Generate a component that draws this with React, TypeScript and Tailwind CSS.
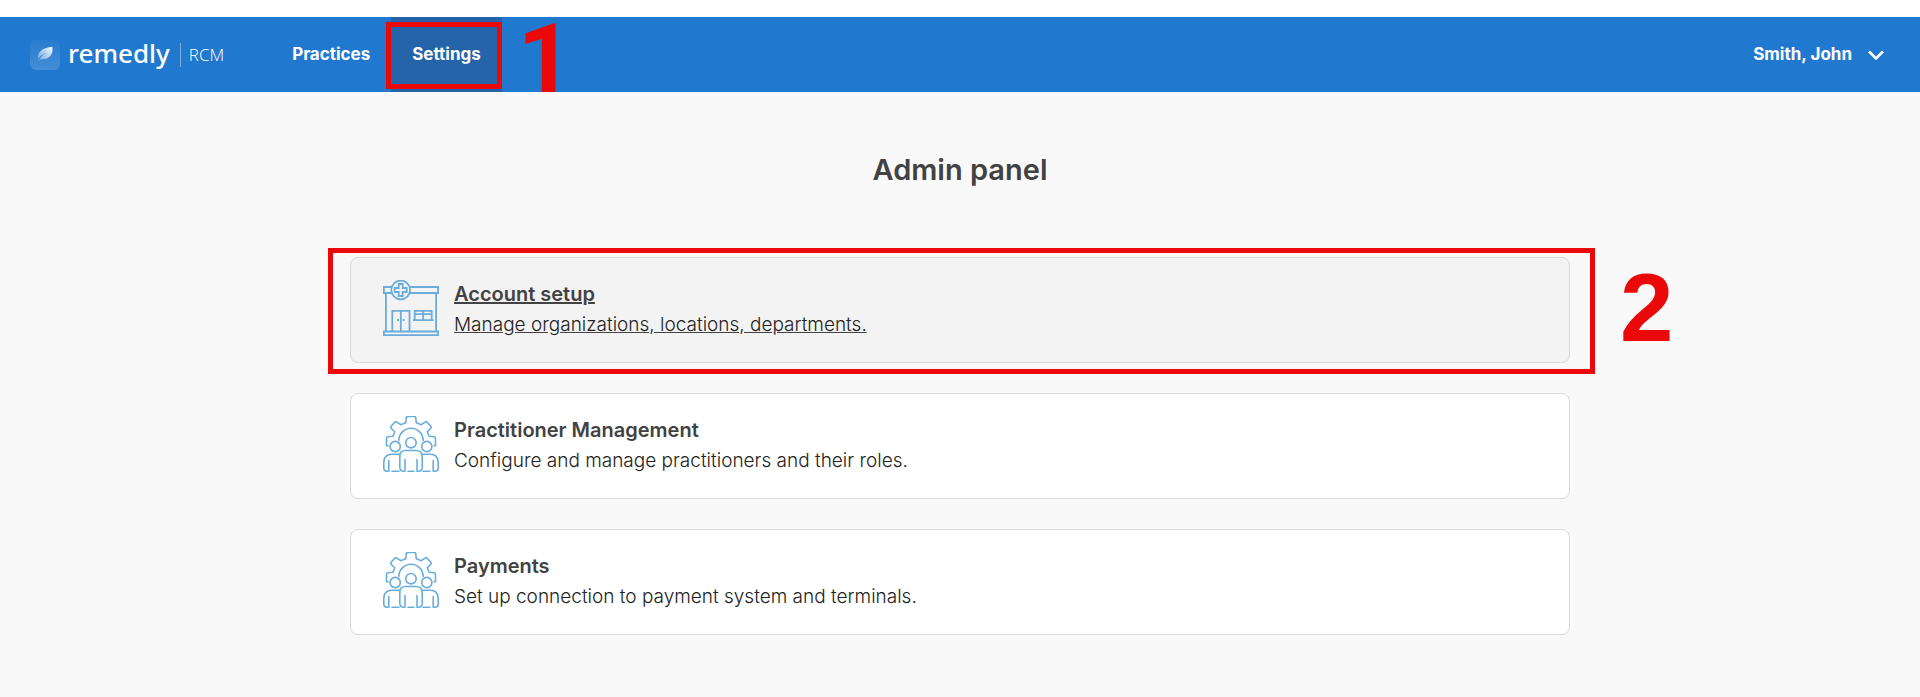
import React from "react";

type Panel = {
  title: string;
  description: string;
  icon: React.ReactNode;
  active?: boolean;
};

function LogoMark() {
  return (
    <svg viewBox="0 0 30 30" className="h-[30px] w-[30px]" aria-hidden="true">
      <defs>
        <linearGradient id="tile" x1="0" y1="0" x2="0" y2="1">
          <stop offset="0" stopColor="#fff" stopOpacity="0.03" />
          <stop offset="1" stopColor="#fff" stopOpacity="0.16" />
        </linearGradient>
        <linearGradient id="leaf" x1="1" y1="0" x2="0" y2="1">
          <stop offset="0.1" stopColor="#fff" stopOpacity="0.9" />
          <stop offset="1" stopColor="#fff" stopOpacity="0.25" />
        </linearGradient>
      </defs>
      <rect width="30" height="30" rx="6" fill="url(#tile)" />
      <path
        d="M22.4 6.8c-5 .7-9.500 1.800-12.300 4.700-2 2.100-2.600 4.600-1.900 7.200 2.200-3.100 5-5 8.300-6.200-3.300 2-6.200 4.500-8.100 8.700 1-1.200 2-1.900 3.300-2 4 .1 7.300-.9 9.200-3.900 1.600-2.600 1.900-5.500 1.500-8.500z"
        fill="url(#leaf)"
      />
    </svg>
  );
}

function BuildingIcon() {
  return (
    <svg
      viewBox="0 0 56 56"
      className="h-14 w-14 shrink-0"
      fill="none"
      stroke="#6aaddc"
      strokeWidth="1.8"
      aria-hidden="true"
    >
      <path d="M8.500 7H.9v6h8M26.500 7h28.600v6H26.500M2.900 13v38.500M53.100 13v38.500" />
      <circle cx="17.700" cy="10" r="9.400" />
      <path d="M15.700 4h4v4h4v4h-4v4h-4v-4h-4V8h4z" />
      <path d="M.9 51.500h54.200v3.700H.9zM9.300 51V30.900h17.200V51M17.800 31v20" />
      <path d="M14 40h2M19.700 40h2M31.700 40v-9.200h17V40M40.200 31v9M31.700 34.200h17M30 40.200h20.600" />
    </svg>
  );
}

function TeamIcon() {
  return (
    <svg
      viewBox="0 0 56 56"
      className="h-14 w-14 shrink-0"
      fill="none"
      stroke="#6aaddc"
      strokeWidth="1.600"
      strokeLinecap="round"
      strokeLinejoin="round"
      aria-hidden="true"
    >
      <path d="M5 29.700H3.500v-7.500q0-1.500 1.500-1.500l5-.5 1.700-4.500-3.500-3.500q-1-1 0-2l3.600-4q1-1 2 0l3.900 2.500 5-2 .6-5q.1-1.200 1.300-1.200h6.800q1.200 0 1.300 1.200l.6 5 5 2 3.900-2.500q1-1 2 0l3.600 4q1 1 0 2l-3.500 3.500 1.700 4.500 5 .5q1.500 0 1.500 1.500v7.500H51" />
      <path d="M15.800 24.500a12.200 12.200 0 0 1 24.400 0" />
      <circle cx="28" cy="26.700" r="5.200" />
      <circle cx="12.200" cy="30.500" r="5.100" />
      <circle cx="43.800" cy="30.500" r="5.100" />
      <path d="M21.500 55.200h-1q-3.700-.2-3.700-4V40.500q0-6 6-6h10.400q6 0 6 6v10.700q0 3.800-3.700 4h-1M22 43.500v11.700M34 43.500v11.700M25 55.200h6" />
      <path d="M16.500 38.300H9q-8.200 0-8.200 8.500V52q0 3.200 3.200 3.200h1.800V44.500M9 55.200h7" />
      <path d="M39.500 38.300H47q8.200 0 8.200 8.500V52q0 3.200-3.200 3.200h-1.800V44.500M47 55.200h-7" />
    </svg>
  );
}

const panels: Panel[] = [
  {
    title: "Account setup",
    description: "Manage organizations, locations, departments.",
    icon: <BuildingIcon />,
    active: true,
  },
  {
    title: "Practitioner Management",
    description: "Configure and manage practitioners and their roles.",
    icon: <TeamIcon />,
  },
  {
    title: "Payments",
    description: "Set up connection to payment system and terminals.",
    icon: <TeamIcon />,
  },
];

function Header() {
  return (
    <header className="mt-[17px] flex h-[75px] items-stretch bg-[#2178cf] pl-[30px] pr-9 text-white">
      <a href="#" className="flex items-center">
        <LogoMark />
        <span className="ml-2 pb-1 font-['Noto_Sans'] text-[26px] leading-8 font-medium">
          remedly
        </span>
        <span className="mr-2 ml-2.5 h-6 w-px bg-white/40" />
        <span className="font-['Open_Sans'] text-[17px] font-light">RCM</span>
      </a>
      <nav className="ml-12 flex text-[17px] font-bold">
        <a href="#" className="flex items-center pr-[21px] pl-5">
          Practices
        </a>
        <div className="relative flex">
          <a href="#" className="flex items-center bg-[#2564a8] px-[21px]">
            Settings
          </a>
          <div className="pointer-events-none absolute top-[5px] right-0 bottom-[3px] -left-[5px] border-5 border-[#eb0808]" />
          <span className="pointer-events-none absolute top-0 left-full ml-4 font-['Roboto'] text-[96px] leading-[84px] font-bold text-[#eb0808]">
            1
          </span>
        </div>
      </nav>
      <button className="ml-auto flex items-center gap-4 text-[17px] font-bold">
        Smith, John
        <svg
          viewBox="0 0 16 10"
          className="h-2.5 w-4"
          fill="none"
          stroke="currentColor"
          strokeWidth="2.500"
          aria-hidden="true"
        >
          <path d="M1 1.500l7 7 7-7" />
        </svg>
      </button>
    </header>
  );
}

function PanelCard({ title, description, icon, active }: Panel) {
  return (
    <div className="relative">
      <a
        href="#"
        className={
          active
            ? "flex h-[106px] gap-[15px] rounded-lg border border-[#d9d9d9] bg-[#f3f3f3] px-8 pt-[22px] underline"
            : "flex h-[106px] gap-[15px] rounded-lg border border-[#d9d9d9] bg-white px-8 pt-[22px]"
        }
      >
        {icon}
        <div>
          <h2 className="text-[20px] leading-[29px] font-semibold">{title}</h2>
          <p className="text-[19px] leading-[32px] font-light text-[#222]">
            {description}
          </p>
        </div>
      </a>
      {active && (
        <>
          <div className="pointer-events-none absolute -top-[9px] -right-[25px] -bottom-[11px] -left-[22px] border-5 border-[#eb0808]" />
          <span className="pointer-events-none absolute top-0 left-full ml-[50px] font-['Liberation_Sans'] text-[96px] leading-[102px] font-bold text-[#eb0808]">
            2
          </span>
        </>
      )}
    </div>
  );
}

export default function App() {
  return (
    <div className="flex min-h-screen flex-col bg-white font-['Inter',sans-serif] text-[#424242]">
      <Header />
      <main className="flex-1 bg-[#f9f9f9] px-6 pt-14 pb-[62px]">
        <h1 className="text-center text-[29px] leading-[43px] font-semibold">
          Admin panel
        </h1>
        <div className="mx-auto mt-[66px] flex max-w-[1220px] flex-col gap-[30px]">
          {panels.map((panel) => (
            <PanelCard key={panel.title} {...panel} />
          ))}
        </div>
      </main>
    </div>
  );
}
